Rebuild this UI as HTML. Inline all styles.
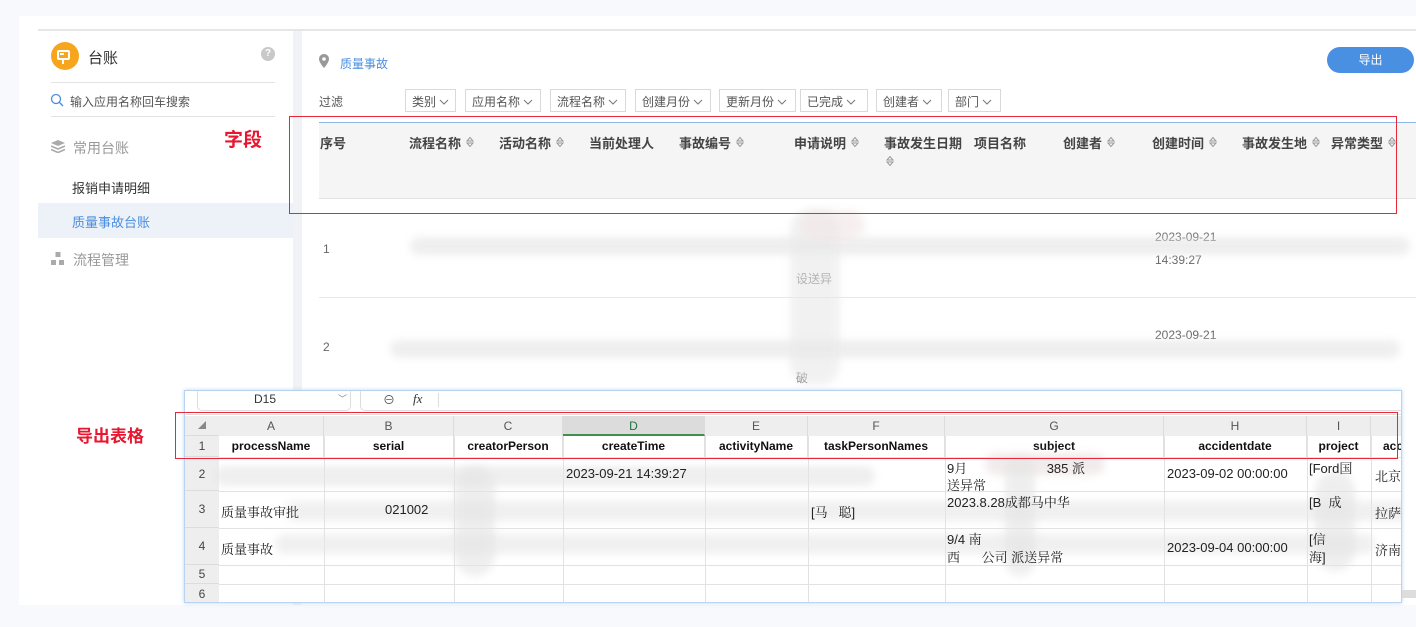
<!DOCTYPE html>
<html><head><meta charset="utf-8"><style>
*{margin:0;padding:0;box-sizing:border-box}
body{width:1416px;height:627px;overflow:hidden;background:#f7f9fc;font-family:"Liberation Sans","Noto Sans CJK SC",sans-serif;position:relative;color:#333}
.a{position:absolute;white-space:nowrap}
.dd{position:absolute;top:89px;height:23px;border:1px solid #d9d9d9;background:#fff;font-size:12px;color:#555;padding:3px 0 0 6px;white-space:nowrap}
.dd svg{margin-left:3px;vertical-align:1px}
.th{position:absolute;top:133px;font-size:13px;font-weight:bold;color:#444;white-space:nowrap}
.so{display:inline-block;margin-left:5px;vertical-align:0px}
.blur{position:absolute;background:#e4e4e4;border-radius:20px;filter:blur(4px);opacity:.75}
.xl{position:absolute;left:184px;top:390px;width:1218px;height:213px;background:#fff;border:1px solid #b8d4f0;box-shadow:0 0 4px #bcd6f2;overflow:hidden}
.ch{position:absolute;top:25px;height:20px;background:#eeeeee;border-right:1px solid #dcdcdc;text-align:center;font-size:12px;color:#555;line-height:20px}
.c1{position:absolute;top:45px;height:21px;border-right:1px solid #e0e0e0;text-align:center;font-size:12px;font-weight:bold;color:#111;line-height:21px}
.rh{position:absolute;left:0;width:34px;background:#eeeeee;text-align:center;font-size:12px;color:#444;border-bottom:1px solid #dcdcdc}
.hl{position:absolute;left:34px;right:0;height:1px;background:#e2e2e2}
.vl{position:absolute;top:45px;bottom:0;width:1px;background:#e2e2e2}
.cell{position:absolute;font-size:13px;color:#222;font-family:"Liberation Sans","Noto Serif CJK SC",serif;white-space:nowrap}
</style></head><body>
<svg width="0" height="0" style="position:absolute"><defs><symbol id="s" viewBox="0 0 8 12"><path d="M1 5L4 1.5L7 5Z M1 7L4 10.5L7 7Z" fill="none" stroke="#999" stroke-width="1"/></symbol></defs></svg>
<div class="a" style="left:19px;top:16px;width:1397px;height:589px;background:#fff"></div>
<div class="a" style="left:38px;top:29px;width:1378px;height:2px;background:#e6e6e6"></div>
<div class="a" style="left:293px;top:31px;width:9px;height:574px;background:#f0f2f5"></div>
<div class="a" style="left:51px;top:42px;width:28px;height:28px;border-radius:50%;background:#f7a51c"></div>
<div class="a" style="left:57px;top:50px;width:13px;height:10px;border:2px solid #fff;border-radius:2px"></div>
<div class="a" style="left:60px;top:53px;width:4px;height:2px;background:#fff"></div>
<div class="a" style="left:62px;top:60px;width:2px;height:4px;background:#fff"></div>
<div class="a" style="left:88px;top:47px;font-size:15px;color:#333">台账</div>
<div class="a" style="left:261px;top:47px;width:14px;height:14px;border-radius:50%;background:#c8c8c8;color:#fff;font-size:10px;font-weight:bold;text-align:center;line-height:14px">?</div>
<div class="a" style="left:51px;top:82px;width:224px;height:1px;background:#e3e3e3"></div>
<svg class="a" style="left:50px;top:93px" width="14" height="14" viewBox="0 0 14 14"><circle cx="6" cy="6" r="4.5" fill="none" stroke="#4a8ee0" stroke-width="1.3"/><line x1="9.3" y1="9.3" x2="13" y2="13" stroke="#4a8ee0" stroke-width="1.4"/></svg>
<div class="a" style="left:70px;top:93px;font-size:12px;color:#555">输入应用名称回车搜索</div>
<div class="a" style="left:51px;top:116px;width:224px;height:1px;background:#e3e3e3"></div>
<svg class="a" style="left:51px;top:140px" width="14" height="13" viewBox="0 0 14 13"><path d="M7 0L14 3L7 6L0 3Z" fill="#aaa"/><path d="M0 6L7 9L14 6" fill="none" stroke="#aaa" stroke-width="1.6"/><path d="M0 9.5L7 12.5L14 9.5" fill="none" stroke="#aaa" stroke-width="1.6"/></svg>
<div class="a" style="left:73px;top:138px;font-size:14px;color:#999">常用台账</div>
<div class="a" style="left:224px;top:125px;font-size:19px;font-weight:bold;color:#e8162f">字段</div>
<div class="a" style="left:72px;top:178px;font-size:13px;color:#333">报销申请明细</div>
<div class="a" style="left:38px;top:203px;width:255px;height:35px;background:#edf1f8"></div>
<div class="a" style="left:72px;top:212px;font-size:13px;color:#4a8ee0">质量事故台账</div>
<svg class="a" style="left:51px;top:252px" width="14" height="14" viewBox="0 0 14 14"><rect x="4.5" y="0" width="5" height="5" fill="#aaa"/><rect x="0" y="8" width="5" height="5" fill="#aaa"/><rect x="8" y="8" width="5" height="5" fill="#aaa"/></svg>
<div class="a" style="left:73px;top:250px;font-size:14px;color:#999">流程管理</div>
<svg class="a" style="left:319px;top:54px" width="10" height="14" viewBox="0 0 10 14"><path d="M5 0C2.2 0 0 2.2 0 5C0 8.5 5 14 5 14C5 14 10 8.5 10 5C10 2.2 7.8 0 5 0Z" fill="#999"/><circle cx="5" cy="5" r="1.8" fill="#fff"/></svg>
<div class="a" style="left:340px;top:55px;font-size:12px;color:#4a8ee0">质量事故</div>
<div class="a" style="left:1327px;top:47px;width:87px;height:26px;border-radius:13px;background:#4a90e2;color:#fff;font-size:12px;text-align:center;line-height:26px">导出</div>
<div class="a" style="left:319px;top:93px;font-size:12px;color:#555">过滤</div>
<div class="dd" style="left:405px;width:51px">类别<svg width="10" height="6"><path d="M1 1L5 5L9 1" fill="none" stroke="#777"/></svg></div>
<div class="dd" style="left:465px;width:76px">应用名称<svg width="10" height="6"><path d="M1 1L5 5L9 1" fill="none" stroke="#777"/></svg></div>
<div class="dd" style="left:550px;width:76px">流程名称<svg width="10" height="6"><path d="M1 1L5 5L9 1" fill="none" stroke="#777"/></svg></div>
<div class="dd" style="left:635px;width:76px">创建月份<svg width="10" height="6"><path d="M1 1L5 5L9 1" fill="none" stroke="#777"/></svg></div>
<div class="dd" style="left:719px;width:77px">更新月份<svg width="10" height="6"><path d="M1 1L5 5L9 1" fill="none" stroke="#777"/></svg></div>
<div class="dd" style="left:800px;width:68px">已完成<svg width="10" height="6"><path d="M1 1L5 5L9 1" fill="none" stroke="#777"/></svg></div>
<div class="dd" style="left:876px;width:66px">创建者<svg width="10" height="6"><path d="M1 1L5 5L9 1" fill="none" stroke="#777"/></svg></div>
<div class="dd" style="left:948px;width:53px">部门<svg width="10" height="6"><path d="M1 1L5 5L9 1" fill="none" stroke="#777"/></svg></div>
<div class="a" style="left:319px;top:122px;width:1097px;height:77px;background:#f5f5f5;border-top:1px solid #8db8ea;border-bottom:1px solid #e3e3e3"></div>
<div class="th" style="left:320px">序号</div>
<div class="th" style="left:409px">流程名称<svg class="so" width="8" height="12"><use href="#s"/></svg></div>
<div class="th" style="left:499px">活动名称<svg class="so" width="8" height="12"><use href="#s"/></svg></div>
<div class="th" style="left:589px">当前处理人</div>
<div class="th" style="left:679px">事故编号<svg class="so" width="8" height="12"><use href="#s"/></svg></div>
<div class="th" style="left:794px">申请说明<svg class="so" width="8" height="12"><use href="#s"/></svg></div>
<div class="th" style="left:884px">事故发生日期</div>
<svg class="a" style="left:886px;top:155px" width="8" height="12"><use href="#s"/></svg>
<div class="th" style="left:974px">项目名称</div>
<div class="th" style="left:1063px">创建者<svg class="so" width="8" height="12"><use href="#s"/></svg></div>
<div class="th" style="left:1152px">创建时间<svg class="so" width="8" height="12"><use href="#s"/></svg></div>
<div class="th" style="left:1242px">事故发生地<svg class="so" width="8" height="12"><use href="#s"/></svg></div>
<div class="th" style="left:1331px">异常类型<svg class="so" width="8" height="12"><use href="#s"/></svg></div>
<div class="a" style="left:319px;top:297px;width:1097px;height:1px;background:#e8e8e8"></div>
<div class="a" style="left:323px;top:242px;font-size:12px;color:#666">1</div>
<div class="a" style="left:323px;top:340px;font-size:12px;color:#666">2</div>
<div class="a" style="left:1155px;top:230px;font-size:12px;color:#666">2023-09-21</div>
<div class="a" style="left:1155px;top:253px;font-size:12px;color:#666">14:39:27</div>
<div class="a" style="left:1155px;top:328px;font-size:12px;color:#666">2023-09-21</div>
<div class="a" style="left:796px;top:270px;font-size:12px;color:#666">设送异</div>
<div class="a" style="left:796px;top:369px;font-size:12px;color:#666">破</div>
<div class="blur" style="left:410px;top:237px;width:1000px;height:18px;opacity:.6"></div>
<div class="blur" style="left:390px;top:340px;width:1010px;height:18px;opacity:.6"></div>
<div class="blur" style="left:790px;top:210px;width:50px;height:175px;background:#e9e9e9;opacity:.6"></div>
<div class="blur" style="left:800px;top:210px;width:65px;height:30px;background:#f2e6e6;opacity:.6"></div>
<div class="a" style="left:76px;top:422px;font-size:17px;font-weight:bold;color:#e8162f">导出表格</div>
<div class="xl">
 <div class="a" style="left:12px;top:0;width:154px;height:20px;border:1px solid #ddd;border-top:none;border-radius:0 0 5px 5px;font-size:12px;line-height:16px"><span class="a" style="left:56px;top:0">D15</span><span class="a" style="left:140px;top:0;font-size:9px;color:#888">﹀</span></div>
 <div class="a" style="left:175px;top:0;width:1060px;height:20px;border:1px solid #ddd;border-top:none;border-right:none;border-radius:0 0 0 5px"></div>
 <div class="a" style="left:198px;top:0;font-size:12px;color:#555">⊖</div>
 <div class="a" style="left:228px;top:0;font-size:13px;font-style:italic;font-family:'Liberation Serif',serif;color:#333">fx</div>
 <div class="a" style="left:253px;top:2px;width:1px;height:14px;background:#ddd"></div>
 <div class="a" style="left:0;top:23px;width:1218px;height:1px;background:#ddd"></div>
 <div class="rh" style="top:25px;height:20px;font-size:8px;line-height:20px;color:#888">◢</div>
 <div class="ch" style="left:34px;width:105px">A</div>
 <div class="ch" style="left:139px;width:130px">B</div>
 <div class="ch" style="left:269px;width:109px">C</div>
 <div class="ch" style="left:378px;width:142px;background:#dcdcdc;color:#217346;border-bottom:2px solid #3f8f4f">D</div>
 <div class="ch" style="left:520px;width:103px">E</div>
 <div class="ch" style="left:623px;width:137px">F</div>
 <div class="ch" style="left:760px;width:219px">G</div>
 <div class="ch" style="left:979px;width:143px">H</div>
 <div class="ch" style="left:1122px;width:64px">I</div>
 <div class="ch" style="left:1186px;width:40px"></div>
 <div class="rh" style="top:45px;height:21px;line-height:21px">1</div>
 <div class="rh" style="top:66px;height:34px;line-height:34px">2</div>
 <div class="rh" style="top:100px;height:37px;line-height:37px">3</div>
 <div class="rh" style="top:137px;height:37px;line-height:37px">4</div>
 <div class="rh" style="top:174px;height:19px;line-height:19px">5</div>
 <div class="rh" style="top:193px;height:20px;line-height:20px">6</div>
 <div class="hl" style="top:66px"></div><div class="hl" style="top:100px"></div><div class="hl" style="top:137px"></div><div class="hl" style="top:174px"></div><div class="hl" style="top:193px"></div>
 <div class="vl" style="left:139px"></div><div class="vl" style="left:269px"></div><div class="vl" style="left:378px"></div><div class="vl" style="left:520px"></div><div class="vl" style="left:623px"></div><div class="vl" style="left:760px"></div><div class="vl" style="left:979px"></div><div class="vl" style="left:1122px"></div><div class="vl" style="left:1186px"></div>
 <div class="c1" style="left:34px;width:105px">processName</div>
 <div class="c1" style="left:139px;width:130px">serial</div>
 <div class="c1" style="left:269px;width:109px">creatorPerson</div>
 <div class="c1" style="left:378px;width:142px">createTime</div>
 <div class="c1" style="left:520px;width:103px">activityName</div>
 <div class="c1" style="left:623px;width:137px">taskPersonNames</div>
 <div class="c1" style="left:760px;width:219px">subject</div>
 <div class="c1" style="left:979px;width:143px">accidentdate</div>
 <div class="c1" style="left:1122px;width:64px">project</div>
 <div class="c1" style="left:1186px;width:40px;text-align:left;padding-left:12px">acc</div>
 <div class="blur" style="left:30px;top:75px;width:660px;height:20px;opacity:.6"></div>
 <div class="blur" style="left:90px;top:143px;width:1100px;height:20px;opacity:.55"></div>
 <div class="blur" style="left:100px;top:110px;width:1150px;height:20px;opacity:.55"></div>
 <div class="blur" style="left:270px;top:75px;width:40px;height:110px;opacity:.6"></div>
 <div class="blur" style="left:800px;top:62px;width:120px;height:22px;background:#eadede;opacity:.6"></div>
 <div class="blur" style="left:820px;top:65px;width:30px;height:120px;opacity:.6"></div>
 <div class="blur" style="left:1130px;top:80px;width:40px;height:100px;opacity:.6"></div>
 <div class="cell" style="left:381px;top:75px;font-family:'Liberation Sans',sans-serif">2023-09-21 14:39:27</div>
 <div class="cell" style="left:36px;top:111px">质量事故审批</div>
 <div class="cell" style="left:36px;top:148px">质量事故</div>
 <div class="cell" style="left:200px;top:111px;font-family:'Liberation Sans',sans-serif">021002</div>
 <div class="cell" style="left:626px;top:111px">[马&nbsp;&nbsp;&nbsp;聪]</div>
 <div class="cell" style="left:762px;top:67px">9月&nbsp;&nbsp;&nbsp;&nbsp;&nbsp;&nbsp;&nbsp;&nbsp;&nbsp;&nbsp;&nbsp;&nbsp;&nbsp;&nbsp;&nbsp;&nbsp;&nbsp;&nbsp;&nbsp;&nbsp;&nbsp;&nbsp;385 派</div>
 <div class="cell" style="left:762px;top:84px">送异常</div>
 <div class="cell" style="left:762px;top:101px">2023.8.28成都马中华</div>
 <div class="cell" style="left:762px;top:138px">9/4 南</div>
 <div class="cell" style="left:762px;top:156px">西&nbsp;&nbsp;&nbsp;&nbsp;&nbsp;&nbsp;公司 派送异常</div>
 <div class="cell" style="left:982px;top:75px;font-family:'Liberation Sans',sans-serif">2023-09-02 00:00:00</div>
 <div class="cell" style="left:982px;top:149px;font-family:'Liberation Sans',sans-serif">2023-09-04 00:00:00</div>
 <div class="cell" style="left:1124px;top:67px">[Ford国</div>
 <div class="cell" style="left:1124px;top:101px">[B&nbsp;&nbsp;成</div>
 <div class="cell" style="left:1124px;top:138px">[信</div>
 <div class="cell" style="left:1124px;top:156px">海]</div>
 <div class="cell" style="left:1190px;top:75px">北京</div>
 <div class="cell" style="left:1190px;top:112px">拉萨</div>
 <div class="cell" style="left:1190px;top:149px">济南</div>
</div>
<div class="a" style="left:1402px;top:590px;width:14px;height:8px;background:#ddd"></div>
<div class="a" style="left:289px;top:116px;width:1108px;height:98px;border:1.5px solid #e8283a"></div>
<div class="a" style="left:175px;top:412px;width:1223px;height:47px;border:1.5px solid #e8283a"></div>
</body></html>
